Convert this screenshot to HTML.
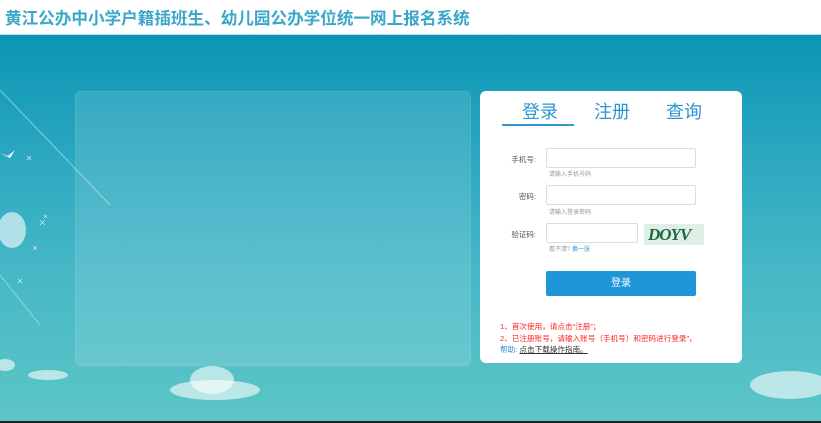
<!DOCTYPE html>
<html><head><meta charset="utf-8"><style>
*{margin:0;padding:0;box-sizing:border-box}
body{width:821px;height:423px;overflow:hidden;font-family:"Liberation Sans","Noto Sans CJK SC",sans-serif;position:relative;background:#fff}
.hd{position:absolute;left:0;top:0;width:821px;height:35px;background:#fff;border-bottom:1px solid #b8dde8}
.hd h1{position:absolute;left:5px;top:5px;font-size:16.6px;font-weight:bold;color:#3aa7c9;white-space:nowrap}
.bg{position:absolute;left:0;top:35px;width:821px;height:386px;background:linear-gradient(180deg,#0b95b4 0%,#2aa7c0 30%,#45b7c6 60%,#5cc6c6 100%)}
.line{position:absolute;left:0;top:421px;width:821px;height:2px;background:#222}
.lp{position:absolute;left:75px;top:91px;width:396px;height:275px;border-radius:6px;background:rgba(255,255,255,0.12);border:1px solid rgba(255,255,255,0.08)}
.card{position:absolute;left:480px;top:91px;width:262px;height:272px;background:#fff;border-radius:6px}
.tab{position:absolute;top:7px;font-size:18px;color:#2d95cf}
.ul{position:absolute;left:22px;top:33px;width:72px;height:2px;background:#3a96d1}
.lb{position:absolute;font-size:7.5px;color:#555;text-align:right;width:60px;left:-4px}
.in{position:absolute;left:66px;border:1px solid #ddd;border-radius:2px;height:20px;background:#fff}
.hint{position:absolute;left:69px;font-size:6px;color:#999}
.btn{position:absolute;left:66px;top:180px;width:150px;height:25px;background:#1e96d8;border-radius:2px;color:#fff;font-size:10px;text-align:center;line-height:25px}
.red{position:absolute;left:20px;font-size:7.6px;color:#f22;white-space:nowrap}
</style></head><body>
<div class="hd"><h1>黄江公办中小学户籍插班生、幼儿园公办学位统一网上报名系统</h1></div>
<div class="bg"></div>
<svg style="position:absolute;left:0;top:35px" width="821" height="386">
<g stroke="rgba(255,255,255,0.45)" stroke-width="1"><line x1="0" y1="55" x2="110" y2="170"/><line x1="0" y1="240" x2="40" y2="290"/></g>
<g fill="rgba(255,255,255,0.6)">
<ellipse cx="12" cy="195" rx="14" ry="18"/>
<ellipse cx="215" cy="355" rx="45" ry="10"/><ellipse cx="212" cy="345" rx="22" ry="14"/>
<ellipse cx="48" cy="340" rx="20" ry="5"/><ellipse cx="790" cy="350" rx="40" ry="14"/><ellipse cx="5" cy="330" rx="10" ry="6"/>
</g>
<path d="M0 118 l8 3 l7 -6 l-5 8 z" fill="#fff"/>
<g stroke="#fff" stroke-width="0.6" opacity="0.8"><path d="M27 121l4 4m0-4l-4 4M40 185l5 5m0-5l-5 5M44 180l3 3m0-3l-3 3M33 211l4 4m0-4l-4 4M18 244l4 4m0-4l-4 4"/></g>
</svg>
<div class="lp"></div>
<div class="card">
<div class="tab" style="left:42px">登录</div><div class="tab" style="left:114px">注册</div><div class="tab" style="left:186px">查询</div>
<div class="ul"></div>
<div class="lb" style="top:63px">手机号:</div><div class="in" style="top:57px;width:150px"></div><div class="hint" style="top:78px">请输入手机号码</div>
<div class="lb" style="top:100px">密码:</div><div class="in" style="top:94px;width:150px"></div><div class="hint" style="top:116px">请输入登录密码</div>
<div class="lb" style="top:138px">验证码:</div><div class="in" style="top:132px;width:92px"></div><div class="hint" style="top:153px">看不清? <span style="color:#2d8fd0">换一张</span></div>
<div style="position:absolute;left:164px;top:133px;width:60px;height:21px;background:#dfeee6;overflow:hidden;font:bold 17px 'Liberation Serif',serif;color:#1e6a3e;letter-spacing:-1px;padding-left:4px;line-height:21px;font-style:italic">DOYV</div>
<div class="btn">登录</div>
<div class="red" style="top:230px">1、首次使用，请点击“注册”；</div>
<div class="red" style="top:242px">2、已注册账号，请输入账号（手机号）和密码进行登录”，</div>
<div class="red" style="top:253px;color:#2d8fd0">帮助: <span style="color:#333;text-decoration:underline">点击下载操作指南。</span></div>
</div>
<div class="line"></div>
</body></html>
